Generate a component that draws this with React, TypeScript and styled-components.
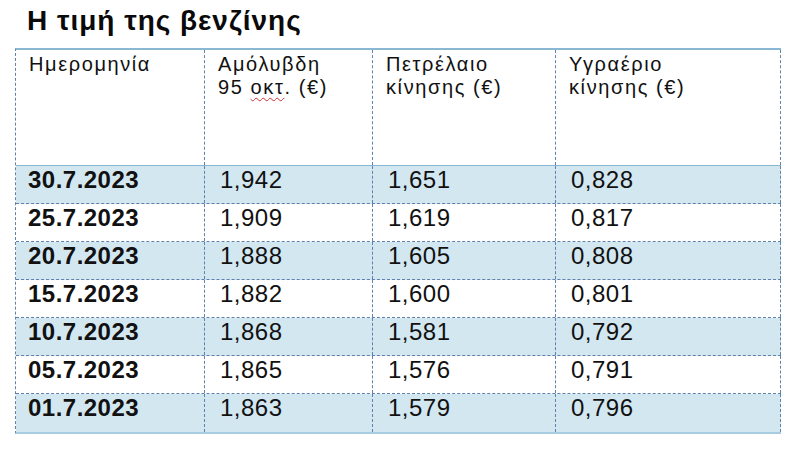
import { createGlobalStyle, styled } from "styled-components";

type Row = { date: string; unleaded: string; diesel: string; lpg: string };

const rows: Row[] = [
  { date: "30.7.2023", unleaded: "1,942", diesel: "1,651", lpg: "0,828" },
  { date: "25.7.2023", unleaded: "1,909", diesel: "1,619", lpg: "0,817" },
  { date: "20.7.2023", unleaded: "1,888", diesel: "1,605", lpg: "0,808" },
  { date: "15.7.2023", unleaded: "1,882", diesel: "1,600", lpg: "0,801" },
  { date: "10.7.2023", unleaded: "1,868", diesel: "1,581", lpg: "0,792" },
  { date: "05.7.2023", unleaded: "1,865", diesel: "1,576", lpg: "0,791" },
  { date: "01.7.2023", unleaded: "1,863", diesel: "1,579", lpg: "0,796" },
];

const GlobalStyle = createGlobalStyle`
  html, body {
    margin: 0;
    padding: 0;
    background: #ffffff;
    font-family: "Liberation Sans", Arial, sans-serif;
    color: #111111;
  }
`;

const App = (): JSX.Element => {
  return (
    <PageS>
      <GlobalStyle />
      <TitleS>Η τιμή της βενζίνης</TitleS>
      <TableS>
        <HeadRowS>
          <HeadCellS>Ημερομηνία</HeadCellS>
          <HeadCellS>
            Αμόλυβδη
            <br />
            95 <SpellS>οκτ</SpellS>. (€)
          </HeadCellS>
          <HeadCellS>
            Πετρέλαιο
            <br />
            κίνησης (€)
          </HeadCellS>
          <HeadCellS>
            Υγραέριο
            <br />
            κίνησης (€)
          </HeadCellS>
        </HeadRowS>
        {rows.map((el, idx) => {
          const striped = idx % 2 === 0;
          const lastRow = idx === rows.length - 1;
          return (
            <BodyRowS key={el.date} $striped={striped} $lastRow={lastRow}>
              <CellS $bold>{el.date}</CellS>
              <CellS>{el.unleaded}</CellS>
              <CellS>{el.diesel}</CellS>
              <CellS>{el.lpg}</CellS>
            </BodyRowS>
          );
        })}
      </TableS>
    </PageS>
  );
};

export default App;

/** page */
const PageS = styled.div`
  width: 800px;
  height: 456px;
  box-sizing: border-box;
  padding: 4px 0 0 15px;
`;

/** title */
const TitleS = styled.h1`
  margin: 0 0 0 12px;
  height: 44px;
  font-size: 28px;
  line-height: 34px;
  font-weight: 700;
  letter-spacing: 0.035em;
  color: #0a0a0a;
`;

/** table */
const TableS = styled.div`
  width: 765px;
  border-top: 2px solid #8ab8d4;
  border-left: 1px dashed #5f82ab;
  border-bottom: 2px solid #a9cde0;
`;

const gridCols = `
  display: grid;
  grid-template-columns: 189px 168px 183px 225px;
`;

const HeadRowS = styled.div`
  ${gridCols}
  height: 115px;
  border-bottom: 1px solid #8ab8d4;
`;

const HeadCellS = styled.div`
  box-sizing: border-box;
  padding: 3px 0 0 13px;
  font-size: 20px;
  line-height: 23px;
  letter-spacing: 0.08em;
  border-right: 1px dashed #5f82ab;
`;

const SpellS = styled.span`
  text-decoration: underline wavy #d03030;
  text-decoration-thickness: 1px;
  text-underline-offset: 3px;
`;

const BodyRowS = styled.div<{ $striped: boolean; $lastRow: boolean }>`
  ${gridCols}
  height: ${(p) => (p.$lastRow ? "38px" : "37px")};
  background: ${(p) => (p.$striped ? "#d3e7f1" : "#ffffff")};
  border-bottom: ${(p) => (p.$lastRow ? "none" : "1px dashed #5f82ab")};
`;

const CellS = styled.div<{ $bold?: boolean }>`
  box-sizing: border-box;
  padding: 0 0 0 ${(p) => (p.$bold ? "12px" : "15px")};
  font-size: 24px;
  line-height: 28px;
  font-weight: ${(p) => (p.$bold ? 700 : 400)};
  letter-spacing: 0.02em;
  border-right: 1px dashed #5f82ab;
`;
